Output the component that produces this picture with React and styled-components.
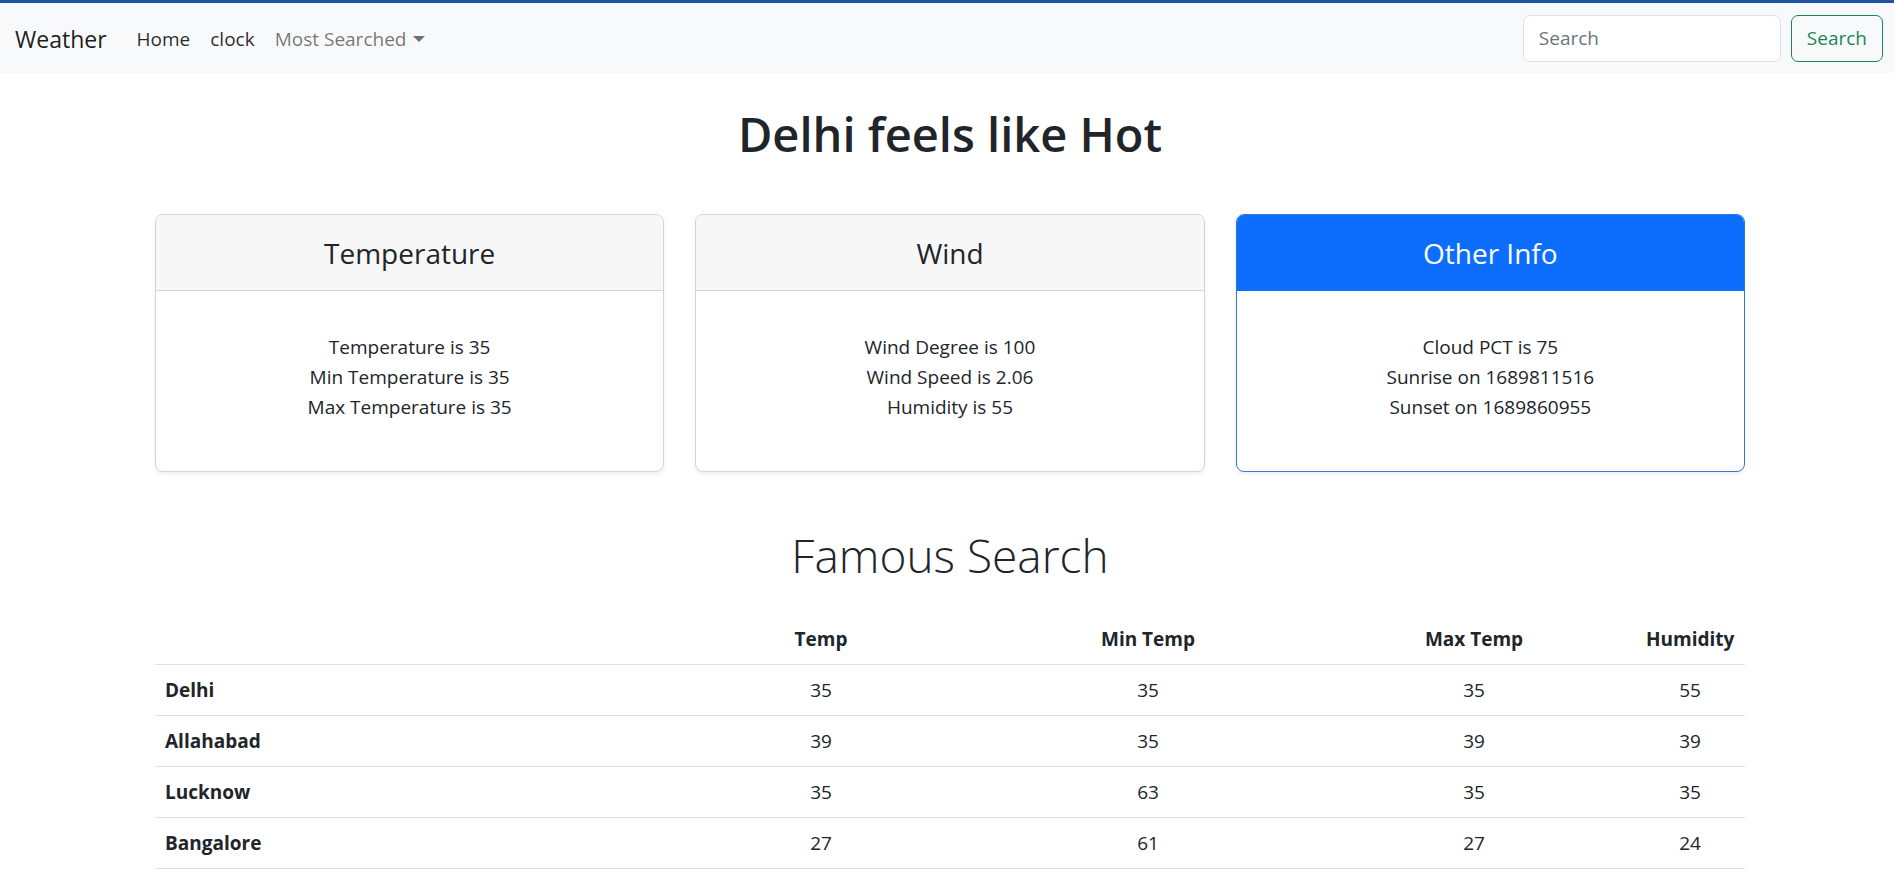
import React from "react";
import styled, { createGlobalStyle } from "styled-components";

const GlobalStyle = createGlobalStyle`
  * {
    box-sizing: border-box;
  }
  body {
    margin: 0;
    background: #fff;
    color: #212529;
    font-family: "Open Sans", "Noto Sans", sans-serif;
    font-size: 19px;
    line-height: 1.5;
  }
`;

const Navbar = styled.nav`
  display: flex;
  align-items: center;
  height: 73px;
  padding: 2px 11px 0 15px;
  border-top: 3px solid #1c55a0;
  background-color: #f8f9fa;
`;

const Brand = styled.a`
  font-size: 23px;
  color: rgba(0, 0, 0, 0.9);
  margin-right: 20px;
  text-decoration: none;
`;

const NavList = styled.ul`
  display: flex;
  align-items: center;
  list-style: none;
  margin: 0;
  padding: 0;
  flex: 1;
`;

const NavLink = styled.a`
  display: flex;
  align-items: center;
  padding: 10px 10px;
  font-size: 19px;
  color: ${(props) => (props.muted ? "rgba(0, 0, 0, 0.55)" : "rgba(0, 0, 0, 0.85)")};
  text-decoration: none;
  cursor: pointer;
`;

const Caret = styled.span`
  display: inline-block;
  margin-left: 7px;
  border-top: 6px solid rgba(0, 0, 0, 0.55);
  border-left: 6px solid transparent;
  border-right: 6px solid transparent;
`;

const SearchForm = styled.form`
  display: flex;
  gap: 10px;
  margin: -2px 0 0;
`;

const SearchInput = styled.input`
  width: 258px;
  height: 47px;
  padding: 7px 15px;
  font-family: inherit;
  font-size: 19px;
  color: #212529;
  background: #fff;
  border: 1px solid #dee2e6;
  border-radius: 7px;
  outline: none;
  &::placeholder {
    color: #6c757d;
  }
`;

const SearchButton = styled.button`
  height: 47px;
  padding: 7px 15px;
  font-family: inherit;
  font-size: 19px;
  color: #198754;
  background: transparent;
  border: 1px solid #198754;
  border-radius: 7px;
  cursor: pointer;
`;

const Main = styled.main`
  width: 1590px;
  margin-left: calc(50% - 792px);
  padding-top: 31px;
`;

const Title = styled.h1`
  margin: 0;
  text-align: center;
  font-size: 47px;
  font-weight: 600;
  line-height: 60px;
  color: #212529;
`;

const CardRow = styled.div`
  display: grid;
  grid-template-columns: repeat(3, 1fr);
  gap: 31px;
  margin-top: 50px;
`;

const Card = styled.div`
  display: flex;
  flex-direction: column;
  height: 258px;
  border: 1px solid ${(props) => (props.primary ? "#3477da" : "#d4d4d4")};
  border-radius: 8px;
  overflow: hidden;
  background: #fff;
  box-shadow: 0 2px 5px rgba(0, 0, 0, 0.07);
`;

const CardHeader = styled.div`
  display: flex;
  align-items: center;
  justify-content: center;
  height: 76px;
  background: ${(props) => (props.primary ? "#0d6efd" : "#f7f7f7")};
  border-bottom: 1px solid ${(props) => (props.primary ? "#0d6efd" : "#d4d4d4")};
`;

const CardTitle = styled.h4`
  margin: 0;
  font-size: 28px;
  font-weight: 400;
  color: ${(props) => (props.primary ? "#fff" : "#212529")};
`;

const CardBody = styled.div`
  flex: 1;
  padding: 41px 20px 49px;
  text-align: center;
  line-height: 30px;
`;

const SubTitle = styled.h2`
  margin: 53px 0 0;
  text-align: center;
  font-size: 46px;
  font-weight: 300;
  line-height: 60px;
  color: #212529;
`;

const Table = styled.div`
  margin-top: 29px;
`;

const TableRow = styled.div`
  display: grid;
  grid-template-columns: 503px 326px 328px 324px 108px;
  border-bottom: 1px solid #dee2e6;
`;

const Cell = styled.div`
  padding: 10px;
  height: 50px;
  line-height: 30px;
  text-align: ${(props) => (props.left ? "left" : "center")};
  font-weight: ${(props) => (props.bold ? 700 : 400)};
  white-space: nowrap;
`;

const cards = [
  {
    title: "Temperature",
    lines: ["Temperature is 35", "Min Temperature is 35", "Max Temperature is 35"],
  },
  {
    title: "Wind",
    lines: ["Wind Degree is 100", "Wind Speed is 2.06", "Humidity is 55"],
  },
  {
    title: "Other Info",
    primary: true,
    lines: ["Cloud PCT is 75", "Sunrise on 1689811516", "Sunset on 1689860955"],
  },
];

const rows = [
  ["Delhi", 35, 35, 35, 55],
  ["Allahabad", 39, 35, 39, 39],
  ["Lucknow", 35, 63, 35, 35],
  ["Bangalore", 27, 61, 27, 24],
];

const App = () => {
  return (
    <>
      <GlobalStyle />
      <Navbar>
        <Brand href="#">Weather</Brand>
        <NavList>
          <li>
            <NavLink>Home</NavLink>
          </li>
          <li>
            <NavLink>clock</NavLink>
          </li>
          <li>
            <NavLink muted>
              Most Searched
              <Caret />
            </NavLink>
          </li>
        </NavList>
        <SearchForm onSubmit={(e) => e.preventDefault()}>
          <SearchInput type="search" placeholder="Search" />
          <SearchButton type="submit">Search</SearchButton>
        </SearchForm>
      </Navbar>

      <Main>
        <Title>Delhi feels like Hot</Title>

        <CardRow>
          {cards.map((card) => (
            <Card key={card.title} primary={card.primary}>
              <CardHeader primary={card.primary}>
                <CardTitle primary={card.primary}>{card.title}</CardTitle>
              </CardHeader>
              <CardBody>
                {card.lines.map((line) => (
                  <div key={line}>{line}</div>
                ))}
              </CardBody>
            </Card>
          ))}
        </CardRow>

        <SubTitle>Famous Search</SubTitle>

        <Table>
          <TableRow>
            <Cell />
            <Cell bold>Temp</Cell>
            <Cell bold>Min Temp</Cell>
            <Cell bold>Max Temp</Cell>
            <Cell bold>Humidity</Cell>
          </TableRow>
          {rows.map((row) => (
            <TableRow key={row[0]}>
              <Cell left bold>
                {row[0]}
              </Cell>
              {row.slice(1).map((value, i) => (
                <Cell key={i}>{value}</Cell>
              ))}
            </TableRow>
          ))}
        </Table>
      </Main>
    </>
  );
};

export default App;
